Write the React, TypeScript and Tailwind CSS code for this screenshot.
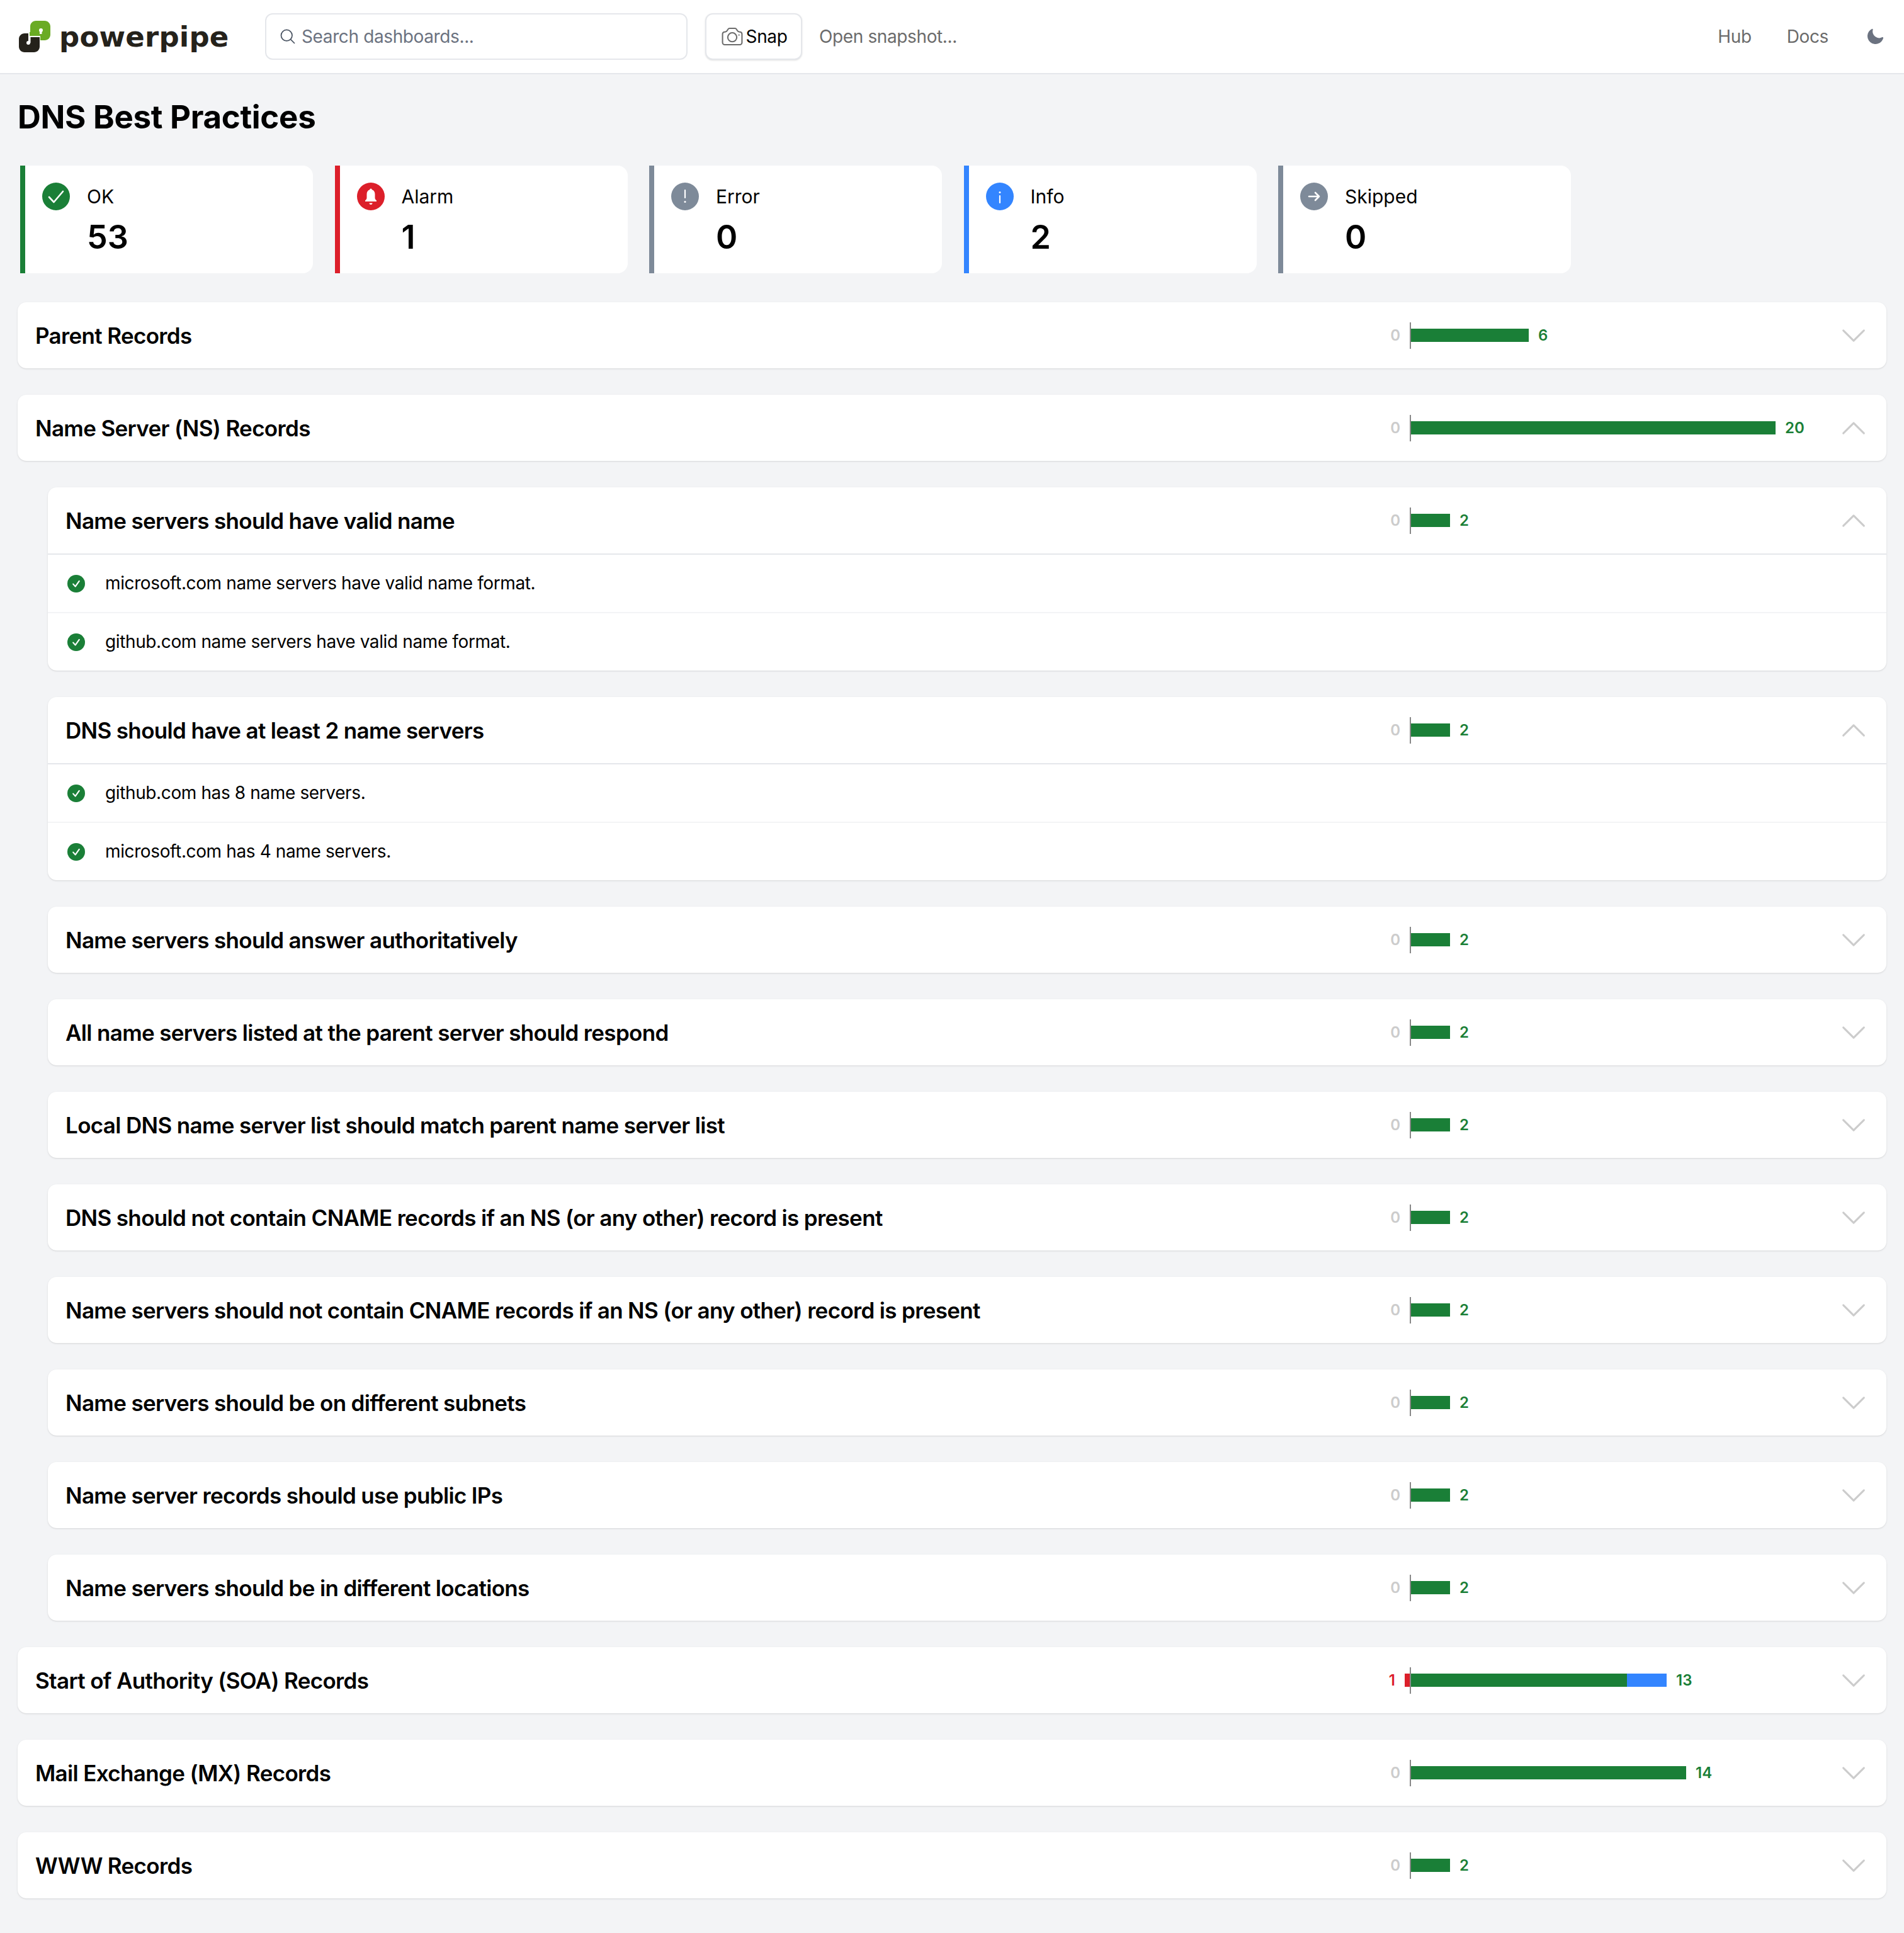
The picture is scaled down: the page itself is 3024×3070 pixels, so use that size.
import React from 'react';

const GREEN = '#1a7f37';

type Check = { title: string; ok: number; width: number; results?: string[]; open?: boolean };

const nameServerChecks: Check[] = [
  {
    title: 'Name servers should have valid name',
    ok: 2,
    width: 62,
    open: true,
    results: ['microsoft.com name servers have valid name format.', 'github.com name servers have valid name format.'],
  },
  {
    title: 'DNS should have at least 2 name servers',
    ok: 2,
    width: 62,
    open: true,
    results: ['github.com has 8 name servers.', 'microsoft.com has 4 name servers.'],
  },
  { title: 'Name servers should answer authoritatively', ok: 2, width: 62 },
  { title: 'All name servers listed at the parent server should respond', ok: 2, width: 62 },
  { title: 'Local DNS name server list should match parent name server list', ok: 2, width: 62 },
  { title: 'DNS should not contain CNAME records if an NS (or any other) record is present', ok: 2, width: 62 },
  { title: 'Name servers should not contain CNAME records if an NS (or any other) record is present', ok: 2, width: 62 },
  { title: 'Name servers should be on different subnets', ok: 2, width: 62 },
  { title: 'Name server records should use public IPs', ok: 2, width: 62 },
  { title: 'Name servers should be in different locations', ok: 2, width: 62 },
];

const OkIcon = ({ size }: { size: number }) => (
  <svg width={size} height={size} viewBox="0 0 44 44" className="shrink-0">
    <circle cx="22" cy="22" r="22" fill="#1a7f37" />
    {size < 30 ? (
      <path d="M14.500 23l5.500 6L29.500 15.500" fill="none" stroke="#fff" strokeWidth="3.400" strokeLinecap="round" strokeLinejoin="round" />
    ) : (
      <path d="M11 23l7.500 8L33 14" fill="none" stroke="#fff" strokeWidth="2.600" strokeLinecap="round" strokeLinejoin="round" />
    )}
  </svg>
);

const AlarmIcon = () => (
  <svg width="44" height="44" viewBox="0 0 44 44" className="shrink-0">
    <circle cx="22" cy="22" r="22" fill="#dc1f2a" />
    <path d="M22 9.500c1 0 1.600.7 1.700 1.800 3.400 1 4.800 3.600 4.800 7.200v5.500c0 2.200 1 3.300 2.500 4.500v1.500H13v-1.500c1.500-1.200 2.500-2.300 2.500-4.500v-5.500c0-3.600 1.400-6.200 4.800-7.200.1-1.100.7-1.800 1.700-1.800z" fill="#fff" />
    <path d="M19.500 32.500h5c0 1.400-1 2.500-2.500 2.500s-2.500-1.100-2.500-2.500z" fill="#fff" />
  </svg>
);

const ErrorIcon = () => (
  <svg width="44" height="44" viewBox="0 0 44 44" className="shrink-0">
    <circle cx="22" cy="22" r="22" fill="#7e8a99" />
    <path d="M22 12v12" stroke="#fff" strokeWidth="2.200" strokeLinecap="round" />
    <circle cx="22" cy="30.500" r="1.500" fill="#fff" />
  </svg>
);

const InfoIcon = () => (
  <svg width="44" height="44" viewBox="0 0 44 44" className="shrink-0">
    <circle cx="22" cy="22" r="22" fill="#3385ff" />
    <circle cx="22" cy="15.500" r="1.500" fill="#fff" />
    <path d="M22 21v11" stroke="#fff" strokeWidth="2.200" strokeLinecap="round" />
  </svg>
);

const SkipIcon = () => (
  <svg width="44" height="44" viewBox="0 0 44 44" className="shrink-0">
    <circle cx="22" cy="22" r="22" fill="#7e8a99" />
    <path d="M14 22h16M24 16l6 6-6 6" fill="none" stroke="#fff" strokeWidth="2.600" strokeLinecap="round" strokeLinejoin="round" />
  </svg>
);

const summary = [
  { label: 'OK', value: 53, border: 'border-[#1a7f37]', icon: <OkIcon size={44} /> },
  { label: 'Alarm', value: 1, border: 'border-[#dc1f2a]', icon: <AlarmIcon /> },
  { label: 'Error', value: 0, border: 'border-[#7e8a99]', icon: <ErrorIcon /> },
  { label: 'Info', value: 2, border: 'border-[#3385ff]', icon: <InfoIcon /> },
  { label: 'Skipped', value: 0, border: 'border-[#7e8a99]', icon: <SkipIcon /> },
];

const Logo = () => (
  <div className="flex w-[332px] items-center">
    <svg width="50" height="50" viewBox="0 0 50 50" className="shrink-0">
      <path d="M18 18V9C18 4 22 0 27 0h14c5 0 9 4 9 9v13c0 5-4 9-9 9h-7v-7H17v-6h1z" fill="#6aab24" />
      <circle cx="35" cy="15" r="3" fill="#fff" />
      <rect x="33" y="15" width="3.500" height="6" fill="#fff" />
      <path d="M0 29c0-5 4-9 9-9h6v6h18v15c0 5-4 9-9 9H9c-5 0-9-4-9-9V29z" fill="#25221b" />
      <circle cx="15" cy="35" r="3" fill="#fff" />
      <rect x="15" y="26" width="3.500" height="9" fill="#fff" />
    </svg>
    <span className="ml-[14px] font-['DejaVu_Sans',sans-serif] text-[45px] font-bold leading-none tracking-[0.2px] text-[#25221b]">
      powerpipe
    </span>
  </div>
);

const Chevron = ({ up }: { up?: boolean }) => (
  <svg width="56" height="56" viewBox="0 0 24 24" fill="none" stroke="#cccccc" strokeWidth="1.300" strokeLinecap="round" strokeLinejoin="round" className="shrink-0">
    <path d={up ? 'M5 15.500l7-7 7 7' : 'M19 8.500l-7 7-7-7'} />
  </svg>
);

const Bars = ({ ok, okWidth, alarm, info }: { ok: number; okWidth: number; alarm?: number; info?: number }) => {
  return (
    <div className="flex h-[42px] items-center">
      <div className="flex w-[50px] items-center justify-end">
        <span className={`mr-[15px] text-[24px] font-semibold leading-none ${alarm ? 'text-[#dc1f2a]' : 'text-[#cccccc]'}`}>{alarm ?? 0}</span>
        {alarm ? <div className="h-[21px] w-2 bg-[#dc1f2a]" /> : null}
      </div>
      <div className="h-[42px] w-[2px] bg-[#888888]" />
      <div className="h-[21px] bg-[#1a7f37]" style={{ width: okWidth }} />
      {info ? <div className="h-[21px] bg-[#3385ff]" style={{ width: info }} /> : null}
      <span className="ml-[15px] text-[24px] font-semibold leading-none" style={{ color: GREEN }}>{ok}</span>
    </div>
  );
};

const RowHeader = ({ title, open, children, border }: { title: string; open?: boolean; children: React.ReactNode; border?: boolean }) => (
  <div className={`flex items-center pl-7 pr-[24px] ${border ? 'h-[107px] border-b-2 border-[#e5e7eb]' : 'h-[105px]'}`}>
    <div className="flex-1 text-[35px] font-semibold leading-[48px] tracking-[-0.66px] text-black">{title}</div>
    <div className="w-[727px]">{children}</div>
    <Chevron up={open} />
  </div>
);

const CheckRow = ({ check }: { check: Check }) => (
  <div className="overflow-hidden rounded-[14px] bg-white shadow-sm">
    <RowHeader title={check.title} open={check.open} border={check.open}>
      <Bars ok={check.ok} okWidth={check.width} />
    </RowHeader>
    {check.results?.map((r, i) => (
      <div key={r} className={`flex items-center pl-[31px] ${i === 0 ? 'h-[93px] border-b-2 border-[#f3f4f6]' : 'h-[91px]'}`}>
        <OkIcon size={28} />
        <span className="ml-[32px] pb-[2px] text-[28px] leading-10 tracking-[-0.38px] text-black">{r}</span>
      </div>
    ))}
  </div>
);

const Section = ({ title, children, open }: { title: string; children: React.ReactNode; open?: boolean }) => (
  <div className="overflow-hidden rounded-[14px] bg-white shadow-sm">
    <RowHeader title={title} open={open}>
      {children}
    </RowHeader>
  </div>
);

export default function App() {
  return (
    <div className="min-h-[3070px] bg-[#f3f4f6] font-['Inter',sans-serif]">
      <header className="flex h-[118px] items-center border-b-2 border-[#e5e7eb] bg-white pl-[30px] pr-[31px]">
        <Logo />
        <div className="ml-[59px] flex h-[74px] w-[671px] items-center rounded-xl border-2 border-[#e5e7eb] bg-white pl-[20px]">
          <svg width="28" height="28" viewBox="0 0 24 24" fill="none" stroke="#4b5563" strokeWidth="1.500" strokeLinecap="round" strokeLinejoin="round" className="shrink-0">
            <path d="m21 21-5.197-5.197m0 0A7.500 7.500 0 1 0 5.196 5.196a7.500 7.500 0 0 0 10.607 10.607Z" />
          </svg>
          <span className="ml-[8px] text-[28px] tracking-[-0.38px] text-[#6b7280]">Search dashboards...</span>
        </div>
        <button className="ml-[28px] flex h-[74px] w-[154px] items-center justify-center rounded-xl border-2 border-[#e5e7eb] bg-white shadow-sm">
          <svg width="38" height="38" viewBox="0 0 24 24" fill="none" stroke="#6b6b6b" strokeWidth="1.300" strokeLinecap="round" strokeLinejoin="round" className="shrink-0">
            <path d="M6.827 6.175A2.310 2.310 0 0 1 5.186 7.230c-.38.054-.757.112-1.134.175C2.999 7.580 2.250 8.507 2.250 9.574V18a2.250 2.250 0 0 0 2.250 2.250h15A2.250 2.250 0 0 0 21.750 18V9.574c0-1.067-.75-1.994-1.802-2.169a47.865 47.865 0 0 0-1.134-.175 2.310 2.310 0 0 1-1.640-1.055l-.822-1.316a2.192 2.192 0 0 0-1.736-1.039 48.774 48.774 0 0 0-5.232 0 2.192 2.192 0 0 0-1.736 1.039l-.821 1.316Z" />
            <path d="M16.500 12.750a4.500 4.500 0 1 1-9 0 4.500 4.500 0 0 1 9 0ZM18.750 10.500h.008v.008h-.008V10.500Z" />
          </svg>
          <span className="ml-[3px] text-[28px] tracking-[-0.38px] text-black">Snap</span>
        </button>
        <span className="ml-[27px] text-[28px] tracking-[-0.38px] text-[#6b6b6b]">Open snapshot...</span>
        <div className="flex-1" />
        <span className="text-[28px] tracking-[-0.38px] text-[#6b6b6b]">Hub</span>
        <span className="ml-[56px] text-[28px] tracking-[-0.38px] text-[#6b6b6b]">Docs</span>
        <svg width="30" height="30" viewBox="0 0 20 20" className="ml-[59px]" fill="#6b7280">
          <path d="M7.455 2.004a.75.75 0 01.26.77 7 7 0 009.958 7.967.75.75 0 011.067.853A8.500 8.500 0 116.647 1.921a.75.75 0 01.808.083z" />
        </svg>
      </header>

      <main className="px-7 pb-[55px]">
        <h1 className="pt-[36px] text-[51px] font-bold leading-[64px] tracking-[-0.3px] text-black">DNS Best Practices</h1>

        <div className="mt-[45px] flex gap-[34.5px] pl-1">
          {summary.map((s) => (
            <div key={s.label} className={`flex h-[171px] w-[465px] rounded-r-2xl border-l-8 bg-white pl-[27px] pt-[27px] ${s.border}`}>
              {s.icon}
              <div className="ml-[27px]">
                <div className="text-[30px] leading-[44px] text-black">{s.label}</div>
                <div className="mt-[17px] text-[52px] font-semibold leading-[52px] text-black">{s.value}</div>
              </div>
            </div>
          ))}
        </div>

        <div className="mt-[46px] flex flex-col gap-[42px]">
          <Section title="Parent Records">
            <Bars ok={6} okWidth={187} />
          </Section>
          <Section title="Name Server (NS) Records" open>
            <Bars ok={20} okWidth={579} />
          </Section>
          <div className="flex flex-col gap-[42px] pl-12">
            {nameServerChecks.map((c) => (
              <CheckRow key={c.title} check={c} />
            ))}
          </div>
          <Section title="Start of Authority (SOA) Records">
            <Bars ok={13} okWidth={343} alarm={1} info={63} />
          </Section>
          <Section title="Mail Exchange (MX) Records">
            <Bars ok={14} okWidth={437} />
          </Section>
          <Section title="WWW Records">
            <Bars ok={2} okWidth={62} />
          </Section>
        </div>
      </main>
    </div>
  );
}
